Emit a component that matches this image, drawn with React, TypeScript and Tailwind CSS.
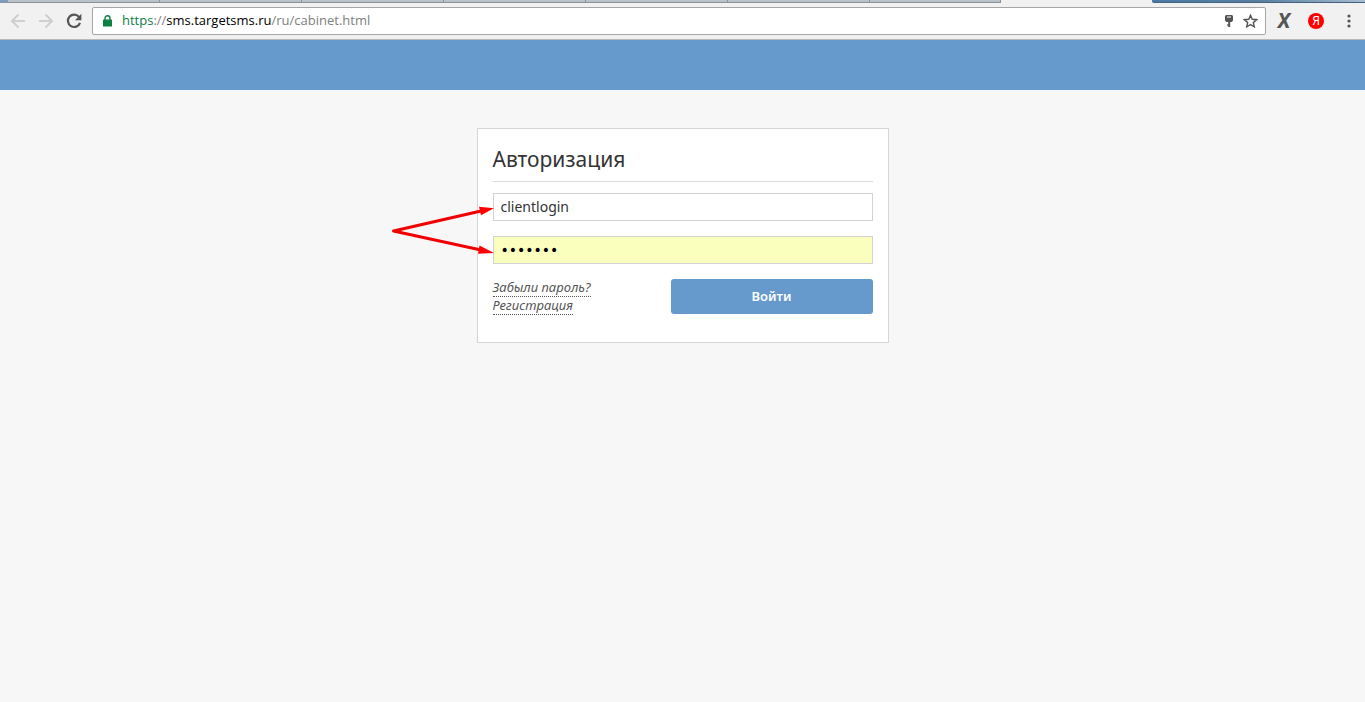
import { useState } from "react";
import type { FormEvent } from "react";

const TABS = [
  "w-[160px]",
  "w-[142px]",
  "w-[142px]",
  "w-[142px]",
  "w-[142px]",
  "w-[142px]",
  "w-[131px]",
];

function TabStrip() {
  return (
    <div className="flex h-[3px] bg-[#f1f1f1]">
      {TABS.map((width, i) => (
        <div
          key={i}
          className={`${width} shrink-0 border-b border-r border-[#8d9296] bg-[#b9c2c8] first:border-l-8 first:border-l-[#7f9cbd] last:rounded-br-xs`}
        />
      ))}
      <div className="w-[151px] shrink-0" />
      <div className="flex-1 rounded-bl-xs border-b border-[#44627f] bg-linear-to-r from-[#4d7aa3] via-[#55809f] to-[#a9bdd2]" />
    </div>
  );
}

function Toolbar() {
  return (
    <div className="flex h-[37px] items-center border-b border-[#b9b9b9] bg-[#f1f1f1]">
      <div className="flex w-[92px] shrink-0 items-center gap-3 pl-[10px]">
        <button type="button" aria-label="Назад" className="text-[#cfcfcf]">
          <svg width="16" height="16" viewBox="0 0 16 16" fill="none" stroke="currentColor" strokeWidth="2">
            <path d="M15 8H2.5M8.5 1.5 2 8l6.5 6.5" />
          </svg>
        </button>
        <button type="button" aria-label="Вперёд" className="text-[#cfcfcf]">
          <svg width="16" height="16" viewBox="0 0 16 16" fill="none" stroke="currentColor" strokeWidth="2">
            <path d="M1 8h12.5M7.5 1.5 14 8l-6.5 6.5" />
          </svg>
        </button>
        <button type="button" aria-label="Обновить" className="text-[#555555]">
          <svg width="16" height="16" viewBox="0 0 16 16" fill="none">
            <path d="M13.2 4.2A6.2 6.2 0 1 0 14 9.8" stroke="currentColor" strokeWidth="2.2" />
            <path d="M15.4.8v6.4H9z" fill="currentColor" />
          </svg>
        </button>
      </div>

      <div className="flex h-[28px] min-w-0 flex-1 items-center rounded-xs border border-[#a6a6a6] bg-white pl-[10px] pr-[7px]">
        <svg width="9" height="12" viewBox="0 0 9 12" className="shrink-0">
          <path d="M2 5V3.2a2.5 2.5 0 0 1 5 0V5" fill="none" stroke="#0b8043" strokeWidth="1.4" />
          <rect y="4.6" width="9" height="7" rx="0.6" fill="#0b8043" />
        </svg>
        <div className="ml-[10px] flex-1 truncate font-['Open_Sans',sans-serif] text-[13px] text-[#808080]">
          <span className="text-[#0b8043]">https</span>://
          <span className="text-black">sms.targetsms.ru</span>/ru/cabinet.html
        </div>
        <button type="button" aria-label="Сохранённые пароли">
          <svg width="8" height="12" viewBox="0 0 8 12">
            <path d="M1 0h6l1 1v4.5L6.8 7H5.2v5H3.2v-1.2H2.2V9.3h1V7h-2L0 5.5V1z" fill="#555555" />
            <path d="M2 2h4" stroke="#ffffff" strokeWidth="1" />
          </svg>
        </button>
        <button type="button" aria-label="Добавить в закладки" className="ml-[10px]">
          <svg width="15" height="14" viewBox="0 0 15 14">
            <path
              d="m7.5 1.3 1.7 4 4.4.4-3.3 2.900 1 4.200-3.800-2.200-3.800 2.200 1-4.200-3.300-2.900 4.400-.4z"
              fill="none"
              stroke="#555555"
              strokeWidth="1.4"
            />
          </svg>
        </button>
      </div>

      <div className="flex w-[99px] shrink-0 items-center pl-[10px]">
        <button
          type="button"
          aria-label="Расширение X"
          className="w-[16px] text-center font-['Roboto',sans-serif] text-[21px] leading-none font-bold text-[#555555] italic"
        >
          X
        </button>
        <button
          type="button"
          aria-label="Яндекс"
          className="ml-[16px] size-[16px] rounded-full bg-[#ff0000] text-center font-['Roboto',sans-serif] text-[12px] leading-[16px] text-white"
        >
          Я
        </button>
        <button type="button" aria-label="Меню" className="ml-[23px]">
          <svg width="4" height="14" viewBox="0 0 4 14" fill="#555555">
            <circle cx="2" cy="2" r="1.6" />
            <circle cx="2" cy="7" r="1.6" />
            <circle cx="2" cy="12" r="1.6" />
          </svg>
        </button>
      </div>
    </div>
  );
}

// Red pointers from the left of the card to both fields
function Pointers() {
  return (
    <svg
      width="106"
      height="60"
      viewBox="0 0 106 60"
      className="pointer-events-none absolute top-[72px] -left-[88px]"
    >
      <path d="M91 10 3.500 30 91 49" fill="none" stroke="#f00000" strokeWidth="3" strokeLinejoin="round" />
      <path d="m89 5.700 15 1.600-13 7zM89.500 44.500l14.500 7.500-16 .7z" fill="#ff0000" />
    </svg>
  );
}

function LoginCard() {
  const [login, setLogin] = useState("clientlogin");
  const [password, setPassword] = useState("1234567");

  const handleSubmit = (e: FormEvent) => e.preventDefault();

  return (
    <form
      onSubmit={handleSubmit}
      className="relative w-full max-w-[412px] border border-[#d6d6d6] bg-white px-[15px] pb-[27px]"
    >
      <h1 className="border-b border-[#d9d9d9] pt-4 pb-2 text-[21px] leading-7 text-[#333333]">
        Авторизация
      </h1>
      <input
        type="text"
        aria-label="Логин"
        value={login}
        onChange={(e) => setLogin(e.target.value)}
        className="mt-[11px] block h-[28px] w-full border border-[#d3d3d3] px-[7px] pb-[2px] text-[14px] text-[#333333] outline-none"
      />
      <input
        type="password"
        aria-label="Пароль"
        value={password}
        onChange={(e) => setPassword(e.target.value)}
        className="mt-[15px] block h-[28px] w-full border border-[#d3d3d3] bg-[#faffbd] px-[7px] font-['DejaVu_Sans',sans-serif] text-[14px] text-black outline-none"
      />
      <div className="mt-[15px] flex items-start justify-between">
        <div className="flex flex-col items-start text-[13px] leading-[17px] text-[#555555] italic">
          <a href="#forgot" className="border-b border-dotted border-[#555555]">
            Забыли пароль?
          </a>
          <a href="#register" className="border-b border-dotted border-[#555555]">
            Регистрация
          </a>
        </div>
        <button
          type="submit"
          className="h-[35px] w-[202px] rounded-[3px] bg-[#6699cc] text-[13px] font-semibold text-white"
        >
          Войти
        </button>
      </div>
      <Pointers />
    </form>
  );
}

export default function App() {
  return (
    <div className="flex min-h-screen flex-col bg-[#f7f7f7] font-['Noto_Sans',sans-serif]">
      <TabStrip />
      <Toolbar />
      <header className="h-[50px] bg-[#6699cc]" />
      <main className="flex flex-1 items-start justify-center pt-[38px]">
        <LoginCard />
      </main>
    </div>
  );
}
